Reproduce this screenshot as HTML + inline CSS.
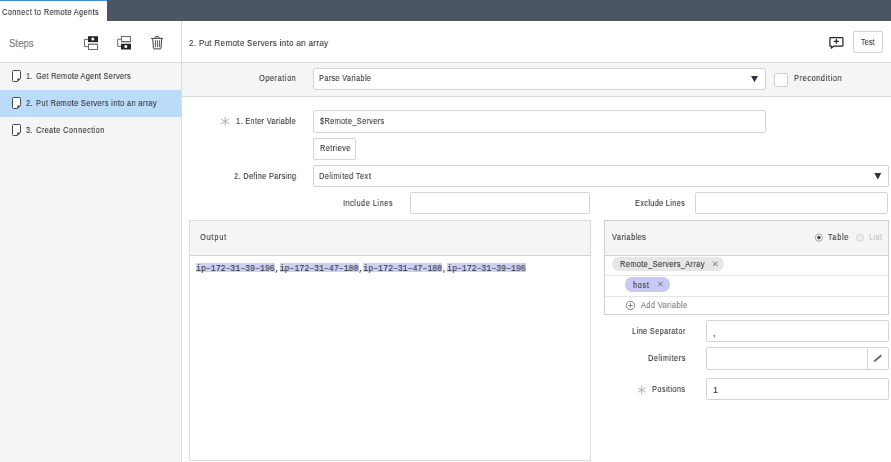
<!DOCTYPE html>
<html><head><meta charset="utf-8">
<style>
*{box-sizing:border-box;margin:0;padding:0}
html,body{width:891px;height:462px;overflow:hidden;background:#fff}
body{position:relative;font-family:"Liberation Sans",sans-serif;color:#333}
.a{position:absolute}
.tx{position:absolute;white-space:pre;line-height:0;transform-origin:0 0;will-change:transform;-webkit-text-stroke:0.1px currentColor}
.box{position:absolute;border:1px solid #d4d4d4;border-radius:2px;background:#fff}
svg{position:absolute;left:0;top:0;overflow:visible}
.mono{position:absolute;font-family:"Liberation Mono",monospace;font-size:8.6px;white-space:pre;color:#333}
.hl{background:#ccd0f5}
#wrap{position:absolute;left:0;top:0;width:891px;height:462px}
</style></head><body><div id="wrap">
<!-- top bar -->
<div class="a" style="left:0;top:0;width:891px;height:21px;background:#4a5663"></div>
<div class="a" style="left:0;top:0;width:107px;height:21px;background:#fff"></div>
<div class="a" style="left:0;top:0;width:107px;height:1px;background:#3b8fe0"></div>

<!-- sidebar -->
<div class="a" style="left:0;top:62px;width:181px;height:400px;background:#f4f5f6"></div>
<div class="a" style="left:0;top:90px;width:181px;height:27px;background:#bbdcf9"></div>
<div class="a" style="left:181px;top:21px;width:1px;height:441px;background:#dcdcdc"></div>
<div class="a" style="left:0;top:62px;width:891px;height:1px;background:#dcdcdc"></div>

<!-- operation band -->
<div class="a" style="left:182px;top:63px;width:709px;height:34px;background:#f4f5f6;border-bottom:1px solid #dcdcdc"></div>

<!-- header boxes -->
<div class="box" style="left:853px;top:31px;width:30px;height:22px;border-color:#d0d0d0"></div>

<!-- form boxes -->
<div class="box" style="left:313px;top:68px;width:453px;height:22px"></div>
<div class="box" style="left:774px;top:73px;width:14px;height:14px;border-color:#cfcfcf"></div>
<div class="box" style="left:313px;top:110px;width:453px;height:23px"></div>
<div class="box" style="left:313px;top:138px;width:43px;height:22px"></div>
<div class="box" style="left:313px;top:165px;width:576px;height:22px"></div>
<div class="box" style="left:410px;top:192px;width:180px;height:22px"></div>
<div class="box" style="left:695px;top:192px;width:193px;height:22px"></div>

<!-- output panel -->
<div class="a" style="left:189px;top:220px;width:402px;height:241px;border:1px solid #dcdcdc;background:#fff"></div>
<div class="a" style="left:190px;top:221px;width:400px;height:35px;background:#f4f5f6;border-bottom:1px solid #d4d4d4"></div>
<div class="a" style="left:196.00px;top:263px;width:78.8px;height:9px;background:#ccd0f5"></div><div class="a" style="left:279.73px;top:263px;width:78.8px;height:9px;background:#ccd0f5"></div><div class="a" style="left:363.45px;top:263px;width:78.8px;height:9px;background:#ccd0f5"></div><div class="a" style="left:447.17px;top:263px;width:78.8px;height:9px;background:#ccd0f5"></div>
<div class="mono" style="left:196px;top:268.5px;line-height:0;transform:scaleX(0.9545);transform-origin:0 0;will-change:transform;-webkit-text-stroke:0.1px #3a3a3a">ip–172–31–39–196,ip–172–31–47–180,ip–172–31–47–180,ip–172–31–39–196</div>

<!-- variables panel -->
<div class="a" style="left:604px;top:220px;width:285px;height:95px;border:1px solid #d0d0d0;background:#fff"></div>
<div class="a" style="left:605px;top:221px;width:283px;height:35px;background:#f4f5f6;border-bottom:1px solid #d4d4d4"></div>
<div class="a" style="left:605px;top:275px;width:283px;height:1px;background:#e4e4e4"></div>
<div class="a" style="left:605px;top:296px;width:283px;height:1px;background:#e4e4e4"></div>
<div class="a" style="left:612px;top:257px;width:112px;height:14px;border-radius:7px;background:#e4e6e8"></div>
<div class="a" style="left:625px;top:277px;width:45px;height:15px;border-radius:7px;background:#c9c9f5"></div>

<!-- lower right form -->
<div class="box" style="left:706px;top:320px;width:183px;height:22px"></div>
<div class="box" style="left:706px;top:347px;width:183px;height:23px"></div>
<div class="a" style="left:867px;top:348px;width:1px;height:21px;background:#d4d4d4"></div>
<div class="box" style="left:706px;top:378px;width:183px;height:22px"></div>

<div class="tx" style="left:2.00px;top:11.88px;font-size:9.0px;color:#2f2f2f;letter-spacing:0.448px;transform:scaleX(0.8200)">Connect to Remote Agents</div>
<div class="tx" style="left:9.10px;top:42.56px;font-size:10.5px;color:#6e6e6e;letter-spacing:0.000px;transform:scaleX(0.9222)">Steps</div>
<div class="tx" style="left:25.70px;top:75.88px;font-size:9.0px;color:#333;letter-spacing:0.000px;transform:scaleX(0.8286)">1.</div>
<div class="tx" style="left:36.00px;top:75.88px;font-size:9.0px;color:#333;letter-spacing:0.347px;transform:scaleX(0.8200)">Get Remote Agent Servers</div>
<div class="tx" style="left:25.70px;top:103.38px;font-size:9.0px;color:#333;letter-spacing:0.000px;transform:scaleX(0.8429)">2.</div>
<div class="tx" style="left:35.50px;top:103.38px;font-size:9.0px;color:#333;letter-spacing:0.434px;transform:scaleX(0.8200)">Put Remote Servers into an array</div>
<div class="tx" style="left:25.70px;top:130.38px;font-size:9.0px;color:#333;letter-spacing:0.000px;transform:scaleX(0.8429)">3.</div>
<div class="tx" style="left:35.50px;top:130.38px;font-size:9.0px;color:#333;letter-spacing:0.511px;transform:scaleX(0.8200)">Create Connection</div>
<div class="tx" style="left:189.20px;top:42.90px;font-size:9.8px;color:#2f2f2f;letter-spacing:0.393px;transform:scaleX(0.8200)">2. Put Remote Servers into an array</div>
<div class="tx" style="left:861.20px;top:41.65px;font-size:8.5px;color:#333;letter-spacing:0.358px;transform:scaleX(0.8200)">Test</div>
<div class="tx" style="left:258.80px;top:78.08px;font-size:9.0px;color:#333;letter-spacing:0.659px;transform:scaleX(0.8200)">Operation</div>
<div class="tx" style="left:319.30px;top:77.88px;font-size:9.0px;color:#333;letter-spacing:0.379px;transform:scaleX(0.8200)">Parse Variable</div>
<div class="tx" style="left:793.70px;top:78.08px;font-size:9.0px;color:#333;letter-spacing:0.721px;transform:scaleX(0.8200)">Precondition</div>
<div class="tx" style="left:236.00px;top:121.08px;font-size:9.0px;color:#333;letter-spacing:0.395px;transform:scaleX(0.8200)">1. Enter Variable</div>
<div class="tx" style="left:319.80px;top:121.18px;font-size:9.0px;color:#333;letter-spacing:0.413px;transform:scaleX(0.8200)">$Remote_Servers</div>
<div class="tx" style="left:319.80px;top:148.28px;font-size:9.0px;color:#333;letter-spacing:0.495px;transform:scaleX(0.8200)">Retrieve</div>
<div class="tx" style="left:233.90px;top:176.18px;font-size:9.0px;color:#333;letter-spacing:0.413px;transform:scaleX(0.8200)">2. Define Parsing</div>
<div class="tx" style="left:319.20px;top:175.88px;font-size:9.0px;color:#333;letter-spacing:0.522px;transform:scaleX(0.8200)">Delimited Text</div>
<div class="tx" style="left:343.28px;top:202.88px;font-size:9.0px;color:#333;letter-spacing:0.616px;transform:scaleX(0.8200)">Include Lines</div>
<div class="tx" style="left:634.80px;top:202.88px;font-size:9.0px;color:#333;letter-spacing:0.384px;transform:scaleX(0.8200)">Exclude Lines</div>
<div class="tx" style="left:200.00px;top:237.18px;font-size:9.0px;color:#333;letter-spacing:0.990px;transform:scaleX(0.8200)">Output</div>
<div class="tx" style="left:611.80px;top:237.08px;font-size:9.0px;color:#333;letter-spacing:0.558px;transform:scaleX(0.8200)">Variables</div>
<div class="tx" style="left:827.60px;top:236.88px;font-size:9.0px;color:#333;letter-spacing:0.817px;transform:scaleX(0.8200)">Table</div>
<div class="tx" style="left:869.00px;top:236.88px;font-size:9.0px;color:#bdbdbd;letter-spacing:0.496px;transform:scaleX(0.8200)">List</div>
<div class="tx" style="left:619.60px;top:264.18px;font-size:9.0px;color:#333;letter-spacing:0.470px;transform:scaleX(0.8200)">Remote_Servers_Array</div>
<div class="tx" style="left:633.30px;top:284.58px;font-size:9.0px;color:#333;letter-spacing:0.715px;transform:scaleX(0.8200)">host</div>
<div class="tx" style="left:640.50px;top:304.98px;font-size:9.0px;color:#7a7a7a;letter-spacing:0.486px;transform:scaleX(0.8200)">Add Variable</div>
<div class="tx" style="left:632.00px;top:330.88px;font-size:9.0px;color:#333;letter-spacing:0.452px;transform:scaleX(0.8200)">Line Separator</div>
<div class="tx" style="left:647.90px;top:357.88px;font-size:9.0px;color:#333;letter-spacing:0.610px;transform:scaleX(0.8200)">Delimiters</div>
<div class="tx" style="left:651.80px;top:388.88px;font-size:9.0px;color:#333;letter-spacing:0.466px;transform:scaleX(0.8200)">Positions</div>
<div class="tx" style="left:713.10px;top:389.88px;font-size:9.0px;color:#333;letter-spacing:0.000px;transform:scaleX(1.0000)">1</div>
<div class="tx" style="left:712.50px;top:332.88px;font-size:9.0px;color:#333;letter-spacing:0.000px;transform:scaleX(1.0000)">,</div>

<svg width="891" height="462" viewBox="0 0 891 462">
  <g fill="none" stroke="#5a5a5a" stroke-width="0.9">
    <path d="M88 39.4H84.5V46.6H88"/>
    <rect x="88.5" y="44.3" width="9" height="5.2"/>
    <path d="M121 39.2H117.7V46.4H121"/>
    <rect x="121.5" y="36.5" width="9" height="5"/>
  </g>
  <rect x="88" y="36.2" width="10" height="5.8" fill="#262626"/>
  <circle cx="92.8" cy="39.1" r="1.5" fill="#fff"/>
  <line x1="88" y1="43.2" x2="98" y2="43.2" stroke="#b8b8b8" stroke-width="1.1"/>
  <rect x="121" y="43.8" width="10" height="5.7" fill="#262626"/>
  <circle cx="125.8" cy="46.5" r="1.5" fill="#fff"/>
  <line x1="121" y1="42.8" x2="131" y2="42.8" stroke="#b8b8b8" stroke-width="1.1"/>
  <g fill="none" stroke="#3c3c3c" stroke-width="1">
    <path d="M151 38.4H163"/>
    <path d="M155.2 38.2V37.3Q155.2 36.6 156 36.6H158.3Q159 36.6 159 37.3V38.2"/>
    <path d="M152.8 39L153.4 48.2Q153.5 48.9 154.2 48.9H160.2Q160.9 48.9 161 48.2L161.6 39"/>
    <path d="M155.4 40.2V47.2M157.4 40.2V47.2M159.4 40.2V47.2" stroke="#555"/>
  </g>
  <g fill="none" stroke="#222" stroke-width="1.2" stroke-linejoin="round">
    <path d="M830.6 37.6H842.2Q842.9 37.6 842.9 38.3V45.5Q842.9 46.2 842.2 46.2H833.6L831.3 48.2V46.2H830.4Q829.9 46.2 829.9 45.5V38.3Q829.9 37.6 830.6 37.6Z"/>
    <path d="M833.8 41.4H838.9M836.35 39V43.8"/>
  </g>
  <g fill="#fff" stroke="#4a4a4a" stroke-width="1" stroke-linejoin="round">
    <path d="M13.3 70.5H19.7Q20.5 70.5 20.5 71.3V78.5L17.5 81.5H13.3Q12.5 81.5 12.5 80.7V71.3Q12.5 70.5 13.3 70.5Z"/>
    <path d="M13.3 97.5H19.7Q20.5 97.5 20.5 98.3V105.5L17.5 108.5H13.3Q12.5 108.5 12.5 107.7V98.3Q12.5 97.5 13.3 97.5Z"/>
    <path d="M13.3 124.5H19.7Q20.5 124.5 20.5 125.3V132.5L17.5 135.5H13.3Q12.5 135.5 12.5 134.7V125.3Q12.5 124.5 13.3 124.5Z"/>
  </g>
  <g fill="#4a4a4a">
    <path d="M17.3 81.6V78.4H20.6Z"/>
    <path d="M17.3 108.6V105.4H20.6Z"/>
    <path d="M17.3 135.6V132.4H20.6Z"/>
  </g>
  <path d="M751 76H758L754.5 82.2Z" fill="#2a3540"/>
  <path d="M874.3 173H881.3L877.8 179.4Z" fill="#2a3540"/>
  <g stroke="#aaa" stroke-width="0.9" fill="none">
    <path d="M225.2 116.9V125.8M221.3 119.2L229.1 123.6M221.3 123.6L229.1 119.2"/>
    <path d="M641.7 385.5V394.4M637.8 387.8L645.6 392.2M637.8 392.2L645.6 387.8"/>
  </g>
  <g fill="none" stroke="#666" stroke-width="0.9">
    <path d="M713 261.5L717.5 266M717.5 261.5L713 266"/>
    <path d="M658.2 281.8L662.7 286.3M662.7 281.8L658.2 286.3"/>
  </g>
  <circle cx="630.4" cy="305.5" r="4.2" fill="none" stroke="#777" stroke-width="0.9"/>
  <path d="M630.4 303.2V307.8M628.1 305.5H632.7" stroke="#777" stroke-width="0.9"/>
  <circle cx="818.9" cy="237.6" r="3.6" fill="#fff" stroke="#999" stroke-width="0.9"/>
  <circle cx="818.9" cy="237.6" r="1.8" fill="#444"/>
  <circle cx="860" cy="237.6" r="3.6" fill="#ececec" stroke="#d2d2d2" stroke-width="0.9"/>
  <path d="M873.4 362.3L874.4 360.1L880.7 354.6L881.9 355.9L875.6 361.5Z" fill="#666"/>
</svg>
</div></body></html>
